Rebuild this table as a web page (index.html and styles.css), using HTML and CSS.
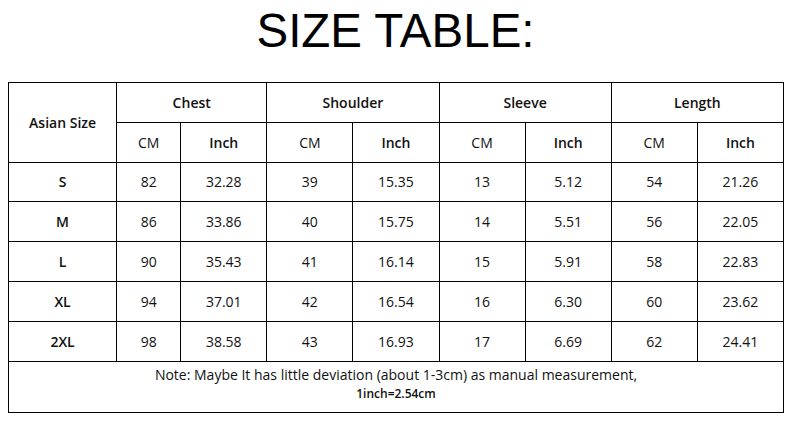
FILE: index.html
```html
<!DOCTYPE html>
<html>
<head>
<meta charset="utf-8">
<link rel="stylesheet" href="styles.css">
</head>
<body>
<h1 class="title">SIZE TABLE:</h1>
<table class="size-table">
  <colgroup>
    <col class="c-size"><col class="c-cm1"><col class="c-in"><col class="c-in"><col class="c-in"><col class="c-in"><col class="c-in"><col class="c-in"><col class="c-in">
  </colgroup>
  <tr class="hrow">
    <th rowspan="2" class="b">Asian Size</th>
    <th colspan="2" class="b">Chest</th>
    <th colspan="2" class="b">Shoulder</th>
    <th colspan="2" class="b">Sleeve</th>
    <th colspan="2" class="b">Length</th>
  </tr>
  <tr class="hrow2">
    <td>CM</td><td class="b">Inch</td>
    <td>CM</td><td class="b">Inch</td>
    <td>CM</td><td class="b">Inch</td>
    <td>CM</td><td class="b">Inch</td>
  </tr>
  <tr><td class="b">S</td><td>82</td><td>32.28</td><td>39</td><td>15.35</td><td>13</td><td>5.12</td><td>54</td><td>21.26</td></tr>
  <tr><td class="b">M</td><td>86</td><td>33.86</td><td>40</td><td>15.75</td><td>14</td><td>5.51</td><td>56</td><td>22.05</td></tr>
  <tr><td class="b">L</td><td>90</td><td>35.43</td><td>41</td><td>16.14</td><td>15</td><td>5.91</td><td>58</td><td>22.83</td></tr>
  <tr><td class="b">XL</td><td>94</td><td>37.01</td><td>42</td><td>16.54</td><td>16</td><td>6.30</td><td>60</td><td>23.62</td></tr>
  <tr><td class="b">2XL</td><td>98</td><td>38.58</td><td>43</td><td>16.93</td><td>17</td><td>6.69</td><td>62</td><td>24.41</td></tr>
  <tr class="note-row">
    <td colspan="9" class="note">
      <div class="note-line">Note: Maybe It has little deviation (about 1-3cm) as manual measurement,</div>
      <div class="note-sub">1inch=2.54cm</div>
    </td>
  </tr>
</table>
</body>
</html>
```
FILE: styles.css
```css
html, body {
  margin: 0;
  padding: 0;
  background: #ffffff;
}
body {
  width: 793px;
  height: 426px;
  overflow: hidden;
  font-family: "Open Sans", "Liberation Sans", sans-serif;
  color: #111;
}
.title {
  margin: 0;
  padding-top: 6px;
  height: 78px;
  box-sizing: border-box;
  text-align: center;
  font-family: "Liberation Sans", Arial, sans-serif;
  font-weight: normal;
  font-size: 47.5px;
  line-height: 50px;
  color: #000;
  padding-right: 2px;
}
.size-table {
  margin-left: 8px;
  margin-top: 4px;
  border-collapse: collapse;
  table-layout: fixed;
  width: 776px;
}
.c-size { width: 108px; }
.c-cm1 { width: 64px; }
.c-in { width: 86px; }
.size-table th, .size-table td {
  border: 1px solid #000;
  padding: 0;
  height: 38.8px;
  text-align: center;
  vertical-align: middle;
  font-size: 14px;
  font-weight: normal;
}
.size-table .b { font-weight: 600; }
.size-table .note {
  height: 47px;
  vertical-align: top;
  padding-top: 3px;
}
.note-line {
  font-size: 14px;
  line-height: 19px;
}
.note-sub {
  font-size: 12px;
  font-weight: 600;
  line-height: 19px;
}
```
